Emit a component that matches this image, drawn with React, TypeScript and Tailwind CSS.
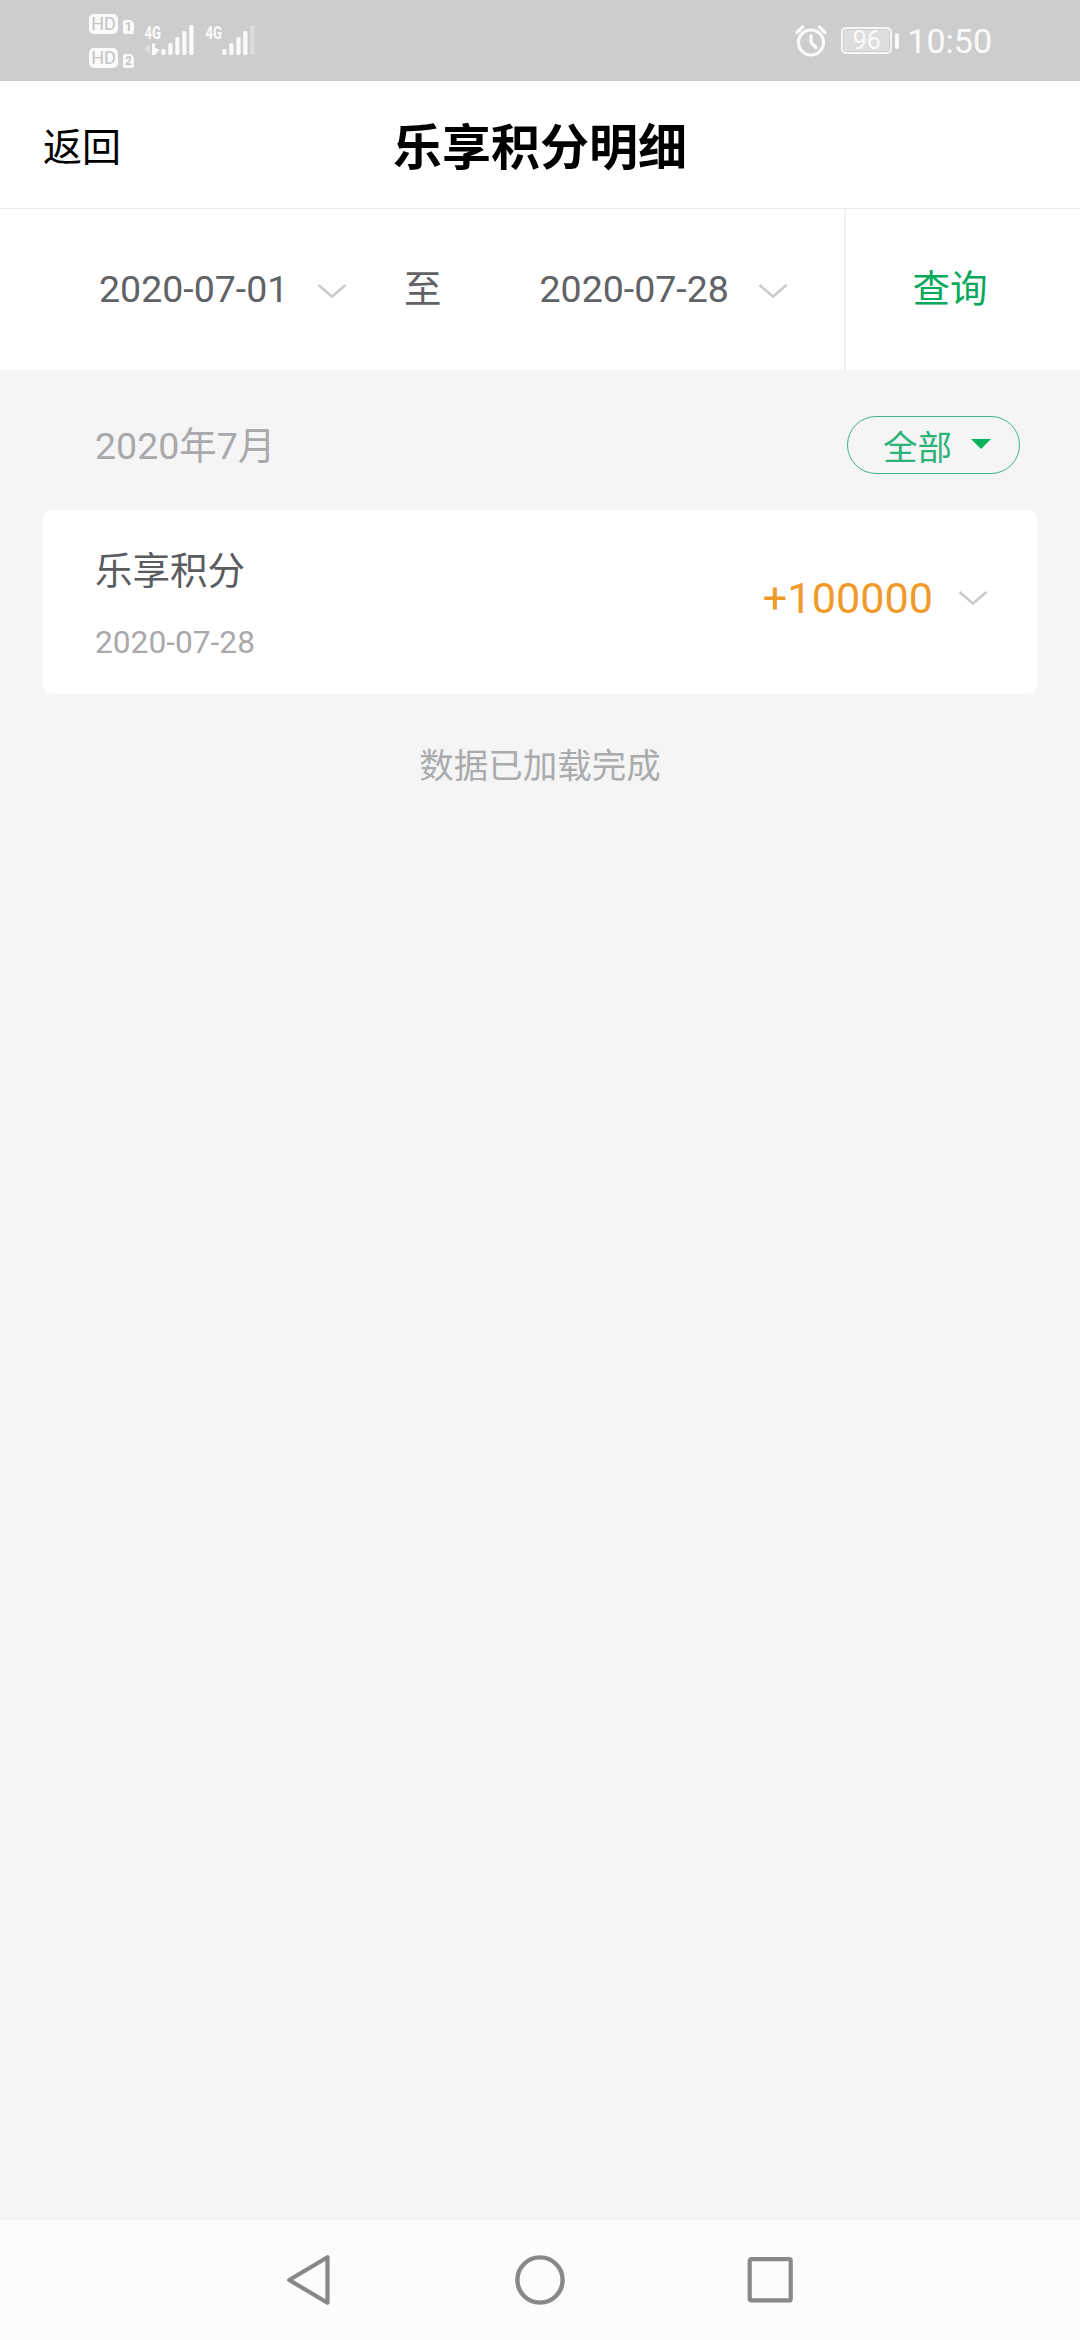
import { useState } from "react";
import clsx from "clsx";

const records = [{ id: 1, title: "乐享积分", date: "2020-07-28", points: 100000 }];

function Chevron({ className }: { className?: string }) {
  return (
    <svg width="30" height="16" viewBox="0 0 30 16" fill="none" className={clsx("shrink-0", className)}>
      <path d="M1.500 2 15 13.500 28.500 2" stroke="#cbcbcb" strokeWidth="2.500" />
    </svg>
  );
}

function SimBadge({ slot }: { slot: string }) {
  return (
    <div className="flex h-5 items-end gap-[5px] text-[#c4c4c4]">
      <span className="flex h-5 w-[29px] items-center justify-center rounded-[5px] bg-[#fafafa] text-[18px] leading-[20px]">
        HD
      </span>
      <span className="flex h-[14px] w-[11px] items-center justify-center rounded-[2px] rounded-tr-[5px] bg-[#fafafa] text-[12px] leading-[14px] font-bold">
        {slot}
      </span>
    </div>
  );
}

function Signal({ level, arrows }: { level: number; arrows?: boolean }) {
  const bars = [6, 12, 18, 24, 30];
  return (
    <svg width="52" height="44" viewBox="0 -10 52 44" fill="#fafafa">
      <text x="0.500" y="14.500" fontSize="19" fontWeight="700" textLength="16.500" lengthAdjust="spacingAndGlyphs">
        4G
      </text>
      {arrows && (
        <>
          <path d="M0 25 6 20v10z" opacity="0.4" />
          <path d="M8 19.500h3v4l4.500 2.500-4.500 5H8z" />
        </>
      )}
      {bars.map((h, i) => (
        <rect
          key={h}
          x={17.3 + i * 7}
          y={31 - h}
          width="4.200"
          height={h}
          rx="1.500"
          opacity={i < level ? 1 : 0.35}
        />
      ))}
    </svg>
  );
}

function StatusBar() {
  return (
    <div className="flex h-[81px] shrink-0 items-start justify-between bg-[#cdcdcd] pr-[88px] pl-[89px] text-[#fafafa]">
      <div className="flex">
        <div className="flex w-[55px] flex-col gap-[14px] pt-[14px]">
          <SimBadge slot="1" />
          <SimBadge slot="2" />
        </div>
        <div className="flex gap-[9px] pt-[14px]">
          <Signal level={5} arrows />
          <Signal level={4} />
        </div>
      </div>
      <div className="flex h-[81px] items-center">
        <svg width="32" height="32" viewBox="0 0 32 32" fill="none" stroke="#fafafa" strokeWidth="3.200">
          <circle cx="16" cy="17.500" r="12.500" />
          <path d="M16 10.500v7l5 5M2 7.500 7.500 2M30 7.500 24.500 2" strokeLinecap="round" />
        </svg>
        <div className="ml-[14px] flex h-[27px] w-[51px] items-center justify-center rounded-[5px] border-2 border-[#f5f5f5] p-[1px]">
          <span className="flex h-full w-full items-center justify-center bg-[#dedede] text-[25px] leading-none">96</span>
        </div>
        <div className="ml-[3px] h-[16px] w-[4px] rounded-sm bg-[#fafafa]" />
        <span className="ml-[8px] text-[34px] leading-none">10:50</span>
      </div>
    </div>
  );
}

function NavBar() {
  return (
    <div className="flex h-[120px] shrink-0 items-center justify-between bg-[#fcfcfc] pr-[285px] pl-[285px]">
      <svg width="48" height="52" viewBox="0 0 48 52" fill="none" stroke="#888" strokeWidth="4.200" strokeLinejoin="round">
        <path d="M4.200 26 42.500 3.200v45.600z" />
      </svg>
      <svg width="52" height="52" viewBox="0 0 52 52" fill="none" stroke="#888" strokeWidth="4.400">
        <circle cx="26" cy="26" r="22.600" />
      </svg>
      <svg width="48" height="52" viewBox="0 0 48 52" fill="none" stroke="#888" strokeWidth="4.200">
        <rect x="2.700" y="5.200" width="41" height="41.200" rx="1.500" />
      </svg>
    </div>
  );
}

export default function App() {
  const [start] = useState("2020-07-01");
  const [end] = useState("2020-07-28");

  return (
    <div className="flex h-[2340px] w-[1080px] flex-col bg-[#f5f5f5] font-[Roboto,'Noto_Sans_CJK_SC',sans-serif]">
      <StatusBar />

      <header className="grid h-[128px] shrink-0 grid-cols-[1fr_auto_1fr] items-center border-b border-[#ebebeb] bg-white px-[43px] pt-[7px] text-black">
        <button className="justify-self-start text-[39px] leading-none">返回</button>
        <h1 className="text-[49px] leading-none font-bold">乐享积分明细</h1>
      </header>

      <div className="flex h-[161px] shrink-0 bg-white text-[37.500px] leading-none text-[#606266]">
        <div className="flex w-[846px] items-center border-r-2 border-[#f0f0f0]">
          <button className="ml-[99px] flex w-[248px] items-center justify-between">
            {start}
            <Chevron className="mt-[3px]" />
          </button>
          <span className="ml-[57px]">至</span>
          <button className="ml-[98px] flex w-[248px] items-center justify-between">
            {end}
            <Chevron className="mt-[3px]" />
          </button>
        </div>
        <button className="flex-1 pr-[26px] text-[#07a95b]">查询</button>
      </div>

      <main className="flex-1 px-[43px]">
        <div className="flex h-[140px] items-center justify-between pt-[11px] pr-[17px] pl-[52px]">
          <span className="pt-[3px] text-[37.500px] leading-none text-[#a9a9ab]">2020年7月</span>
          <button className="mb-[1px] flex h-[58px] w-[173px] items-center rounded-full border-[1.500px] border-[#3db583] pl-[35px] text-[34.500px] leading-none text-[#2db37a]">
            <span className="pt-[7px]">全部</span>
            <svg width="20" height="10" viewBox="0 0 20 10" className="mb-[2px] ml-[19px]">
              <path d="M0 0h20L10 10z" fill="#07b45c" />
            </svg>
          </button>
        </div>

        {records.map((r) => (
          <div key={r.id} className="flex h-[184px] items-center justify-between rounded-[9px] bg-white pr-[49px] pl-[52px]">
            <div className="flex flex-col gap-[37px] pt-[8px]">
              <span className="text-[37.500px] leading-none text-[#5a5c5f]">{r.title}</span>
              <span className="text-[31.700px] leading-none text-[#a9a9ab]">{r.date}</span>
            </div>
            <div className="flex items-center pb-[7px]">
              <span className="text-[43.200px] leading-none text-[#f09a2c]">+{r.points}</span>
              <Chevron className="ml-[25px]" />
            </div>
          </div>
        ))}

        <p className="mt-[55px] text-center text-[34.500px] leading-none text-[#a9abad]">数据已加载完成</p>
      </main>

      <NavBar />
    </div>
  );
}
